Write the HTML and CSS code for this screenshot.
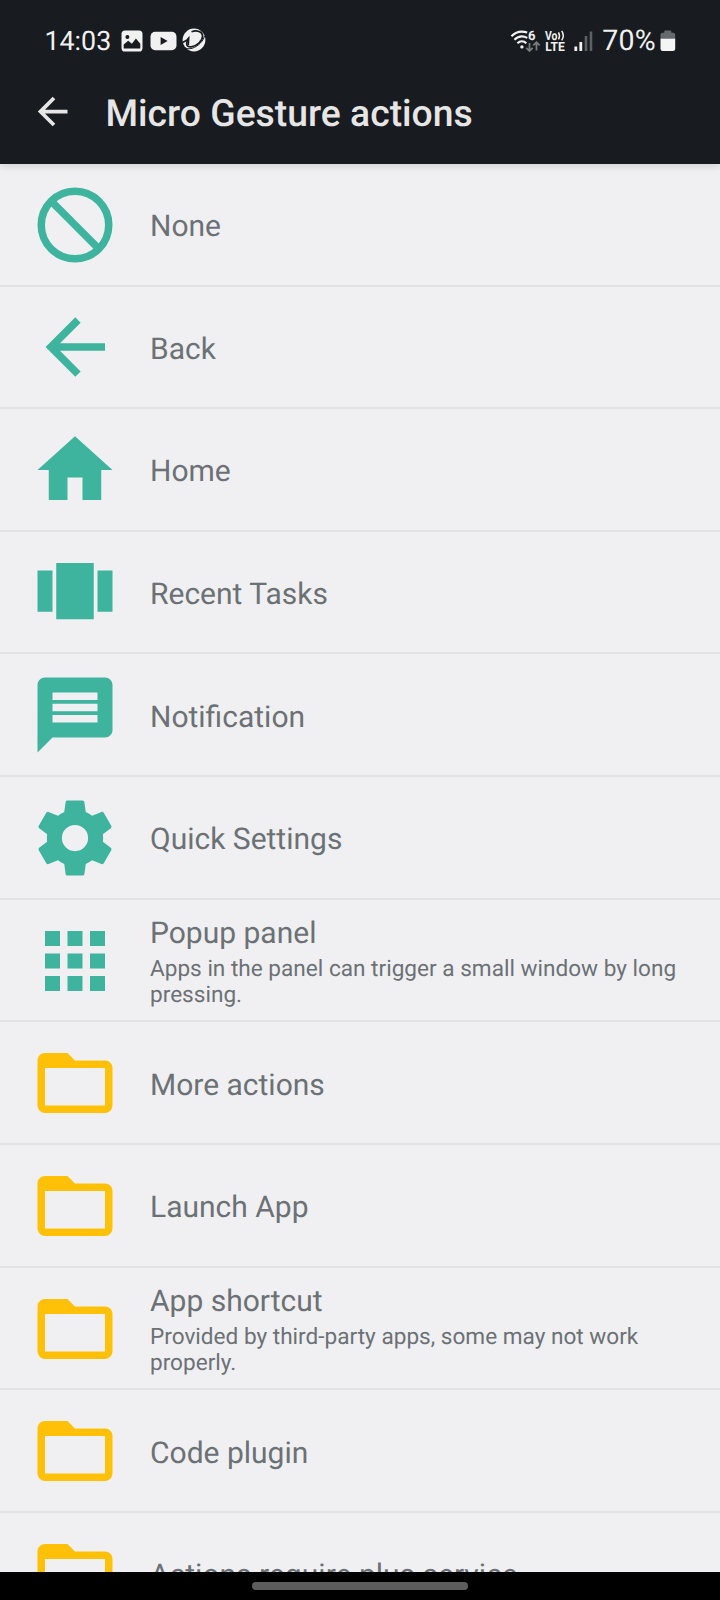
FILE: index.html
```html
<!DOCTYPE html>
<html lang="en">
<head>
<meta charset="utf-8">
<title>Micro Gesture actions</title>
<link rel="stylesheet" href="styles.css">
</head>
<body>
<svg class="defs" aria-hidden="true">
  <symbol id="folder" viewBox="0 0 24 24"><path d="M20 18H4V8h16m0-2h-8l-2-2H4c-1.11 0-2 .89-2 2v12a2 2 0 0 0 2 2h16a2 2 0 0 0 2-2V8c0-1.11-.9-2-2-2z"/></symbol>
</svg>
<div class="screen">
  <header class="top">
    <div class="status">
      <span class="clock">14:03</span>
      <div class="notes">
        <svg width="22" height="22" viewBox="0 0 22 22"><rect x=".5" y=".5" width="21" height="21" rx="3.6" fill="#f1f1f1"/><circle cx="6.4" cy="7" r="2" fill="#181b20"/><path d="M2.7 18.6v-4.2l4.5-3.6 3.7 3 4-5.2 4.4 5.2v4.8z" fill="#181b20"/></svg>
        <svg width="27" height="20" viewBox="0 0 27 20"><rect x=".5" y=".8" width="26" height="18.4" rx="4.6" fill="#f1f1f1"/><path d="M10.6 6v8l7-4z" fill="#181b20"/></svg>
        <svg class="swirl" width="24" height="24" viewBox="0 0 24 24"><circle cx="12" cy="12" r="11.400" fill="#f1f1f1"/><g fill="none" stroke="#181b20"><path d="M9.500 3.800C15 1.800 20.500 3.500 20.600 8c0 5-6 10.300-11.500 10.800-4.600.3-5.800-3.300-2.600-7.800" stroke-width="1.700"/><path d="M.5 14.500l4.200-2.200 2-2.300-.4 7" stroke-width="1.600"/><path d="M22.500 8c-1 5-6.500 10.500-12.500 12.300-3 .8-5.500.6-7.500-.8" stroke-width="1"/></g></svg>
      </div>
      <div class="system">
        <svg width="31" height="24" viewBox="0 0 31 24">
          <g fill="none" stroke="#f1f1f1" stroke-width="2.100"><path d="M1.400 7.200C6 2.700 12 1.800 17.200 3.600"/><path d="M4.400 10.800C8 7.300 13 6.700 17.300 8.900"/><path d="M7.400 14.200c2.600-2.500 6.400-2.500 9 0"/></g><circle cx="11.900" cy="17.900" r="1.700" fill="#f1f1f1"/>
          <text x="18" y="11.200" class="wifi-num">6</text>
          <path d="M19.500 14v8M16.300 18.800l3.200 3.200 3.200-3.200M26.500 21.500v-8.300M23.300 16.400l3.200-3.200 3.200 3.200" fill="none" stroke="#777a7e" stroke-width="1.800"/>
        </svg>
        <svg class="volte" width="22" height="24" viewBox="0 0 22 24">
          <text x="0" y="10.500" textLength="12.500" lengthAdjust="spacingAndGlyphs">Vo</text>
          <path d="M13.500 3.300q2 3.400 0 7M16.700 1.900q3.100 4.600 0 9.500" fill="none" stroke="#f1f1f1" stroke-width="1.500"/>
          <text x=".3" y="22.300" textLength="19.500" lengthAdjust="spacingAndGlyphs">LTE</text>
        </svg>
        <svg class="signal" width="20" height="20" viewBox="0 0 20 20"><path fill="#f1f1f1" d="M.4 15.400h2.800V20H.4zM5.400 11h2.800v9H5.400z"/><path fill="#5d6064" d="M10.700 5h2.600v15h-2.600zM15.700.6h2.600V20h-2.600z"/></svg>
        <span class="percent">70%</span>
        <svg class="battery" width="16" height="22" viewBox="0 0 16 22"><path fill="#66696d" d="M4.300 2.700V1.400Q4.300.5 5.200.5h5.200q.9 0 .9.900v1.300h1.900q2 0 2 2V9.500H.5V4.700q0-2 2-2z"/><path fill="#f5f5f5" d="M.5 8.700h14.700v10.100q0 2.300-2.200 2.300H2.700q-2.200 0-2.200-2.300z"/></svg>
      </div>
    </div>
    <div class="bar">
      <svg class="up" viewBox="0 0 24 24"><path d="M20 11v2H8l5.500 5.500-1.420 1.420L4.160 12l7.920-7.920L13.500 5.500 8 11z"/></svg>
      <h1 class="title">Micro Gesture actions</h1>
    </div>
  </header>

  <main class="list">
    <div class="row">
      <svg class="icon" viewBox="0 0 24 24"><circle cx="12" cy="12" r="9" fill="none" stroke="#3eb39d" stroke-width="2"/><path d="M5.650 5.650l12.700 12.700" stroke="#3eb39d" stroke-width="2"/></svg>
      <div class="text"><div class="name">None</div></div>
    </div>
    <div class="row">
      <svg class="icon" viewBox="0 0 24 24"><path d="M20 11v2H8l5.500 5.500-1.420 1.420L4.160 12l7.920-7.920L13.500 5.500 8 11z"/></svg>
      <div class="text"><div class="name">Back</div></div>
    </div>
    <div class="row">
      <svg class="icon" viewBox="0 0 24 24"><path d="M10 20v-6h4v6h5v-8h3L12 3 2 12h3v8z"/></svg>
      <div class="text"><div class="name">Home</div></div>
    </div>
    <div class="row">
      <svg class="icon" viewBox="0 0 24 24"><path d="M7 19h10V4H7zm-5-2h4V6H2zM18 6v11h4V6z"/></svg>
      <div class="text"><div class="name">Recent Tasks</div></div>
    </div>
    <div class="row">
      <svg class="icon" viewBox="0 0 24 24"><path d="M20 2H4c-1.100 0-1.990.9-1.990 2L2 22l4-4h14c1.100 0 2-.9 2-2V4c0-1.100-.9-2-2-2zm-2 12H6v-2h12zm0-3H6V9h12zm0-3H6V6h12z"/></svg>
      <div class="text"><div class="name">Notification</div></div>
    </div>
    <div class="row">
      <svg class="icon" viewBox="0 0 24 24"><path d="M12 15.500A3.500 3.500 0 0 1 8.500 12 3.500 3.500 0 0 1 12 8.500a3.500 3.500 0 0 1 3.500 3.500 3.500 3.500 0 0 1-3.500 3.500m7.430-2.530c.04-.32.070-.64.070-.97s-.03-.66-.07-1l2.110-1.630c.19-.15.240-.42.120-.64l-2-3.460c-.12-.22-.39-.31-.61-.22l-2.490 1c-.52-.39-1.060-.73-1.690-.98l-.37-2.650A.506.506 0 0 0 14 2h-4c-.25 0-.46.180-.5.420l-.37 2.650c-.63.250-1.170.590-1.690.980l-2.490-1c-.22-.09-.49 0-.61.220l-2 3.460c-.13.220-.07.490.120.640L4.570 11c-.04.340-.07.670-.07 1s.03.650.070.970l-2.110 1.660c-.19.150-.25.420-.12.640l2 3.460c.12.220.39.300.61.220l2.490-1.010c.52.400 1.060.740 1.690.990l.37 2.650c.04.240.25.420.5.420h4c.25 0 .46-.18.500-.42l.37-2.650c.63-.26 1.170-.59 1.690-.99l2.490 1.010c.22.080.49 0 .61-.22l2-3.460c.12-.22.070-.49-.12-.64z"/></svg>
      <div class="text"><div class="name">Quick Settings</div></div>
    </div>
    <div class="row">
      <svg class="icon" viewBox="0 0 24 24"><path d="M4 4h4v4H4zM10 4h4v4h-4zM16 4h4v4h-4zM4 10h4v4H4zM10 10h4v4h-4zM16 10h4v4h-4zM4 16h4v4H4zM10 16h4v4h-4zM16 16h4v4h-4z"/></svg>
      <div class="text"><div class="name">Popup panel</div><div class="desc">Apps in the panel can trigger a small window by long pressing.</div></div>
    </div>
    <div class="row">
      <svg class="icon folder"><use href="#folder"/></svg>
      <div class="text"><div class="name">More actions</div></div>
    </div>
    <div class="row">
      <svg class="icon folder"><use href="#folder"/></svg>
      <div class="text"><div class="name">Launch App</div></div>
    </div>
    <div class="row">
      <svg class="icon folder"><use href="#folder"/></svg>
      <div class="text"><div class="name">App shortcut</div><div class="desc">Provided by third-party apps, some may not work properly.</div></div>
    </div>
    <div class="row">
      <svg class="icon folder"><use href="#folder"/></svg>
      <div class="text"><div class="name">Code plugin</div></div>
    </div>
    <div class="row">
      <svg class="icon folder"><use href="#folder"/></svg>
      <div class="text"><div class="name">Actions require plus service</div></div>
    </div>
  </main>

  <footer class="nav"><div class="pill"></div></footer>
</div>
</body>
</html>
```
FILE: styles.css
```css
* { box-sizing: border-box; }

body {
  margin: 0;
  font-family: Roboto, "Liberation Sans", sans-serif;
  text-rendering: geometricPrecision;
}

svg { display: block; flex: none; overflow: visible; }

.defs { display: none; }

.screen {
  width: 720px;
  height: 1600px;
  display: flex;
  flex-direction: column;
  overflow: hidden;
  background: #f0f0f3;
}

/* Header */
.top {
  position: relative;
  z-index: 1;
  flex: none;
  height: 164px;
  background: #181b20;
  color: #e6e6e6;
  box-shadow: 0 2px 8px rgba(0, 0, 0, .14);
}

.status {
  display: flex;
  align-items: center;
  height: 81px;
  padding: 0 44px 0 44.500px;
  color: #f1f1f1;
}

.clock { font-size: 26.800px; }

.notes {
  display: flex;
  align-items: center;
  gap: 6.500px;
  margin-left: 10px;
}

.swirl { margin: -1px 0 0 -1px; }

.system {
  display: flex;
  align-items: center;
  margin-left: auto;
}

.wifi-num { font: 700 13px Roboto, sans-serif; fill: #f1f1f1; }

.volte {
  margin-left: 4px;
  font: 700 12.500px Roboto, sans-serif;
  fill: #f1f1f1;
}

.signal { margin-left: 7px; }

.percent {
  margin-left: 8px;
  font-size: 28.500px;
  letter-spacing: .3px;
}

.battery { margin-left: 4px; }

.bar {
  display: flex;
  align-items: center;
  height: 61px;
  padding-left: 30px;
}

.up {
  width: 45px;
  height: 45px;
  margin-top: -1px;
  fill: #e6e6e6;
}

.title {
  margin: 4px 0 0 30.500px;
  font-size: 37.300px;
  font-weight: 500;
  line-height: 44px;
}

/* Action list */
.list {
  flex: 1;
  min-height: 0;
  overflow: hidden;
}

.row {
  display: flex;
  align-items: center;
  height: 122.670px;
  padding: 1px 30px 0;
  border-bottom: 2px solid #e2e2e4;
}

.row:first-child { height: 122.500px; }

.icon {
  width: 90px;
  height: 90px;
  fill: #3eb39d;
}

.folder { fill: #ffc107; }

.text {
  flex: 1;
  padding-top: 4px;
  margin-left: 30px;
  color: #6c7175;
}

.name {
  font-size: 30px;
  line-height: 35.200px;
}

.desc {
  margin-top: 4px;
  font-size: 22.600px;
  line-height: 26.600px;
}

/* Gesture navigation */
.nav {
  flex: none;
  display: flex;
  justify-content: center;
  height: 28px;
  padding-top: 10px;
  background: #000;
}

.pill {
  width: 216px;
  height: 8px;
  border-radius: 4px;
  background: #5d5d5d;
}
```
